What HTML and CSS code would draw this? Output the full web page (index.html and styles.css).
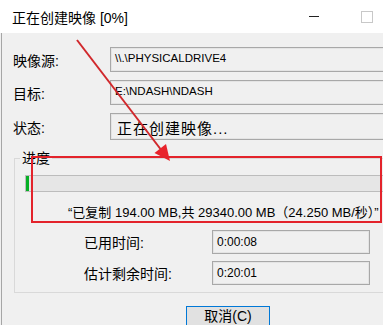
FILE: index.html
```html
<!DOCTYPE html>
<html>
<head>
  <title>正在创建映像 [0%]</title>
  <link rel="stylesheet" href="styles.css">
</head>
<body>
  <div class="window">
    <div class="titlebar">
      <span class="title">正在创建映像 [0%]</span>
      <span class="btn-min"></span>
      <span class="btn-max"></span>
    </div>

    <div class="content">
      <div class="row">
        <span class="label">映像源:</span>
        <div class="field">\\.\PHYSICALDRIVE4</div>
      </div>
      <div class="row">
        <span class="label">目标:</span>
        <div class="field">E:\NDASH\NDASH</div>
      </div>
      <div class="row row-status">
        <span class="label">状态:</span>
        <div class="field field-status">正在创建映像...</div>
      </div>

      <fieldset class="group">
        <legend>进度</legend>
        <div class="progress"><div class="progress-fill" style="width: 3px"></div></div>
        <p class="rate">“已复制 194.00 MB,共 29340.00 MB（24.250 MB/秒）”</p>

        <div class="time-row">
          <span class="time-label">已用时间:</span>
          <div class="time-field">0:00:08</div>
        </div>
        <div class="time-row">
          <span class="time-label">估计剩余时间:</span>
          <div class="time-field">0:20:01</div>
        </div>
      </fieldset>

      <button class="cancel-btn">取消(C)</button>
    </div>

    <!-- red markup drawn over the screenshot -->
    <svg class="markup" width="383" height="325" viewBox="0 0 383 325">
      <line x1="77" y1="40" x2="162" y2="151" stroke="#d1282c" stroke-width="2"/>
      <polygon points="170,161 154.5,153 166,144" fill="#e8232b"/>
      <rect x="32" y="157" width="349" height="65" fill="none" stroke="#e3232b" stroke-width="2"/>
    </svg>
  </div>
</body>
</html>
```

FILE: styles.css
```css
body {
  margin: 0;
  font-family: "Liberation Sans", "Noto Sans CJK SC", sans-serif;
  background: #f0f0f0;
  color: #000;
}

.window {
  position: relative;
  width: 383px;
  height: 325px;
  overflow: hidden;
  background: #f0f0f0;
}

.titlebar {
  height: 33px;
  background: #fff;
  display: flex;
  align-items: center;
  padding-left: 12px;
}

.title {
  font-size: 14px;
}

.btn-min {
  margin-left: auto;
  width: 10px;
  height: 1px;
  background: #222;
  margin-right: 42px;
}

.btn-max {
  width: 10px;
  height: 10px;
  border: 1px solid #c8c8c8;
  margin-right: 10px;
}

.content {
  width: 420px;
  margin-left: 1px;
  border-left: 1px solid #a6a6a6;
  padding: 14px 0 20px 11px;
}

.row {
  display: flex;
  align-items: center;
  margin-bottom: 8px;
}

.label {
  width: 97px;
  font-size: 14px;
}

.field {
  flex: 1;
  height: 25px;
  box-sizing: border-box;
  border: 1px solid #a8a8a8;
  box-shadow: inset 0 0 0 1px #e4e4e4;
  background: #f0f0f0;
  padding: 4px 4px 0;
  font-size: 11.5px;
}

.row-status {
  margin-bottom: 0;
}

.field-status {
  height: 27px;
  padding: 3px 6px 0;
  font-size: 15px;
  letter-spacing: 1px;
}

.group {
  width: 420px;
  margin: 9px 0 0 1px;
  padding: 8px 0 7px 10px;
  border: 1px solid #d9d9d9;
}

.group legend {
  font-size: 14px;
  line-height: 18px;
  padding: 0 2px;
  margin-left: -5px;
}

.progress {
  height: 17px;
  box-sizing: border-box;
  border: 1px solid #bcbcbc;
  background: #e6e6e6;
}

.progress-fill {
  height: 100%;
  background: #06b025;
}

.rate {
  margin: 12px 0 0;
  padding-left: 43px;
  font-size: 13px;
  line-height: 18px;
  white-space: nowrap;
}

.time-row {
  display: flex;
  align-items: center;
  margin-top: 8px;
  padding-left: 59px;
}

.time-row + .time-row {
  margin-top: 7px;
}

.time-label {
  width: 128px;
  font-size: 14px;
}

.time-field {
  width: 158px;
  height: 24px;
  box-sizing: border-box;
  border: 1px solid #a8a8a8;
  box-shadow: inset 0 0 0 1px #e4e4e4;
  padding: 4px 4px 0;
  font-size: 12px;
}

.cancel-btn {
  display: block;
  margin: 13px 0 0 173px;
  width: 84px;
  height: 24px;
  border: 1px solid #0078d7;
  background: #e1e1e1;
  font-family: "Liberation Sans", "Noto Sans CJK SC", sans-serif;
  font-size: 14px;
  line-height: 16px;
  padding: 0 0 4px;
}

.markup {
  position: absolute;
  top: 0;
  left: 0;
  pointer-events: none;
}
```
